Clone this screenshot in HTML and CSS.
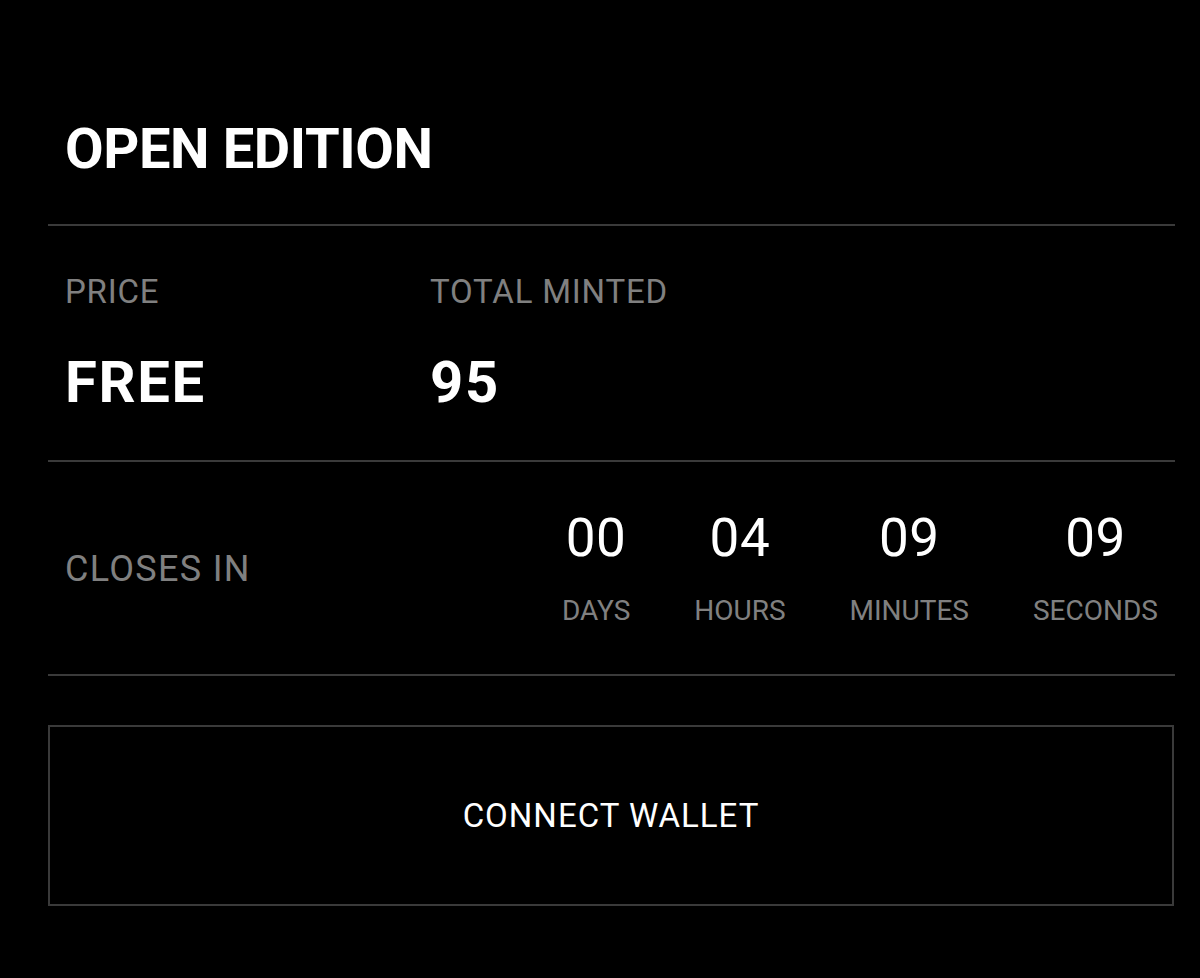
FILE: index.html
```html
<!DOCTYPE html>
<html>
<head>
<meta charset="utf-8">
<link rel="stylesheet" href="styles.css">
</head>
<body>
<div class="panel">
  <div class="section header">
    <h1 class="title">OPEN EDITION</h1>
  </div>
  <div class="section stats">
    <div class="stat">
      <div class="label">PRICE</div>
      <div class="value">FREE</div>
    </div>
    <div class="stat">
      <div class="label">TOTAL MINTED</div>
      <div class="value">95</div>
    </div>
  </div>
  <div class="section closes">
    <div class="closes-label">CLOSES IN</div>
    <div class="countdown">
      <div class="unit"><div class="num">00</div><div class="unit-label">DAYS</div></div>
      <div class="unit"><div class="num">04</div><div class="unit-label">HOURS</div></div>
      <div class="unit"><div class="num">09</div><div class="unit-label">MINUTES</div></div>
      <div class="unit"><div class="num">09</div><div class="unit-label">SECONDS</div></div>
    </div>
  </div>
  <button class="connect">CONNECT WALLET</button>
</div>
</body>
</html>
```
FILE: styles.css
```css
html, body {
  margin: 0;
  padding: 0;
  background: #000;
}
body {
  font-family: Roboto, "Liberation Sans", sans-serif;
  color: #fff;
}
.panel {
  margin: 0 25px 0 48px;
  padding-bottom: 73px;
}
.section {
  border-bottom: 2px solid #3a3a3a;
  padding-left: 17px;
  padding-right: 17px;
}
.header {
  padding-top: 121px;
  padding-bottom: 47px;
}
.title {
  margin: 0;
  font-size: 56px;
  line-height: 56px;
  font-weight: 700;
  letter-spacing: -0.4px;
}
.stats {
  display: grid;
  grid-template-columns: 365px auto;
  padding-top: 49px;
  padding-bottom: 49px;
}
.label {
  font-size: 33px;
  line-height: 33px;
  color: #808080;
  letter-spacing: 0.8px;
}
.value {
  margin-top: 45px;
  font-size: 58px;
  line-height: 58px;
  font-weight: 700;
  letter-spacing: 1.6px;
}
.closes {
  display: flex;
  align-items: center;
  justify-content: space-between;
  padding-top: 50px;
  padding-bottom: 49px;
}
.closes-label {
  font-size: 36px;
  line-height: 36px;
  color: #808080;
  letter-spacing: 1.3px;
}
.countdown {
  display: flex;
  gap: 64px;
}
.unit {
  display: flex;
  flex-direction: column;
  align-items: center;
}
.num {
  font-size: 53px;
  line-height: 53px;
  letter-spacing: 0.5px;
}
.unit-label {
  margin-top: 32px;
  font-size: 28px;
  line-height: 28px;
  color: #808080;
}
.connect {
  display: block;
  box-sizing: border-box;
  width: 1126px;
  height: 181px;
  margin-top: 49px;
  background: #000;
  border: 2px solid #3a3a3a;
  color: #fff;
  font-family: Roboto, "Liberation Sans", sans-serif;
  font-size: 33px;
  letter-spacing: 1px;
  padding: 0;
}
```
